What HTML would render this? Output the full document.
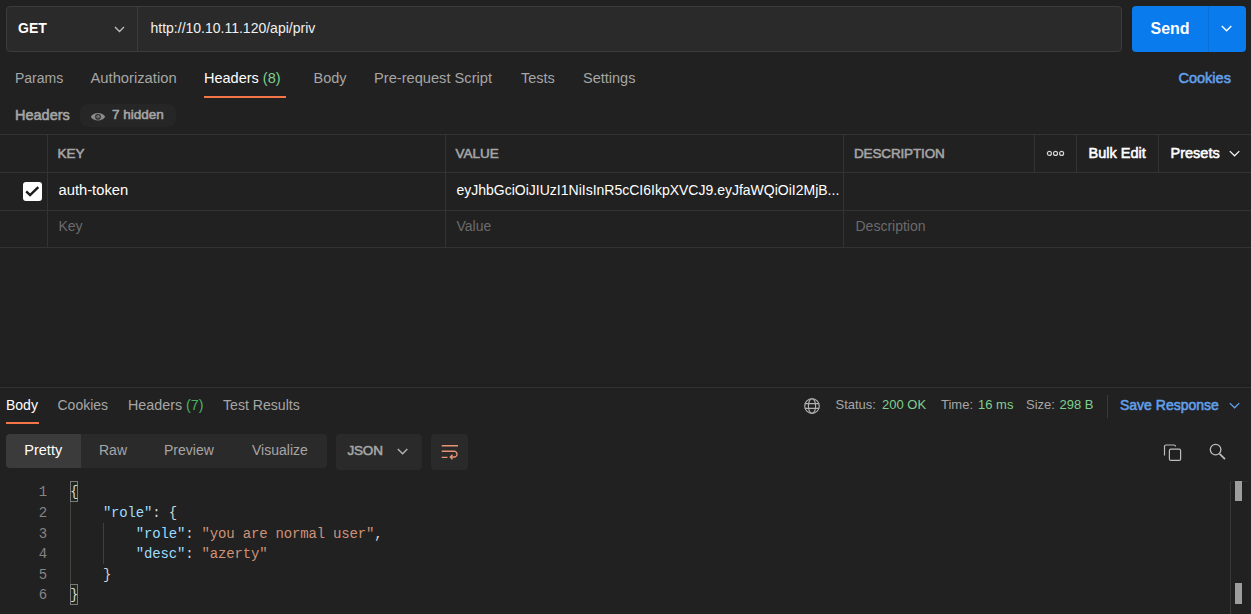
<!DOCTYPE html>
<html><head><meta charset="utf-8">
<style>
*{margin:0;padding:0;box-sizing:border-box}
html,body{width:1251px;height:614px;overflow:hidden;background:#212121}
body{position:relative;font-family:"Liberation Sans",sans-serif;color:#fff}
.a{position:absolute}
.t{position:absolute;white-space:nowrap;line-height:20px;font-size:14px}
.b{font-weight:bold}
.sb{-webkit-text-stroke-width:0.55px}
.g{color:#a6a6a6}
.w{color:#fff}
.ph{color:#6b6b6b}
.grn{color:#7fcf8f}
.grn2{color:#45b460}
.blue{color:#62a0ea}
.hl{position:absolute;left:0;width:1251px;height:1px;background:#333}
.vl{position:absolute;width:1px;background:#333}
svg{position:absolute;overflow:visible}
.ln{left:0;width:47px;text-align:right;color:#858585}
.cd{left:70px;color:#d4d4d4}
.k{color:#9cdcfe}
.s{color:#ce9178}
.mono{font-family:"Liberation Mono",monospace;font-size:14px;letter-spacing:-0.18px;line-height:20.6px;white-space:pre}
</style></head><body>

<!-- URL bar -->
<div class="a" style="left:6px;top:6px;width:1116px;height:46px;border:1px solid #3c3c3c;border-radius:4px;background:#2a2a2a"></div>
<div class="a" style="left:137px;top:7px;width:1px;height:44px;background:#3c3c3c"></div>
<div class="t b w" style="left:18px;top:18px">GET</div>
<svg style="left:114.3px;top:25.5px" width="11" height="7" viewBox="0 0 11 7"><path d="M1 1 L5.5 5.5 L10 1" fill="none" stroke="#bdbdbd" stroke-width="1.4"/></svg>
<div class="t" style="left:150.5px;top:18px;color:#f0f0f0">http://10.10.11.120/api/priv</div>

<div class="a" style="left:1132px;top:6px;width:114px;height:46px;border-radius:4px;background:#097bed"></div>
<div class="a" style="left:1208px;top:6px;width:1px;height:46px;background:#0a6fd6"></div>
<div class="t b w" style="left:1150.5px;top:18.5px;font-size:16px">Send</div>
<svg style="left:1221.4px;top:25.4px" width="11" height="7" viewBox="0 0 11 7"><path d="M0.8 1.1 L5.6 5.8 L10.3 1.1" fill="none" stroke="#fff" stroke-width="1.4"/></svg>

<!-- request tabs -->
<div class="t g" style="left:15px;top:68px;font-size:14px">Params</div>
<div class="t g" style="left:90.5px;top:68px;font-size:14.75px">Authorization</div>
<div class="t w" style="left:204px;top:68px;font-size:14.5px">Headers <span class="grn">(8)</span></div>
<div class="t g" style="left:313.5px;top:68px;font-size:14.5px">Body</div>
<div class="t g" style="left:374px;top:68px;font-size:14.65px">Pre-request Script</div>
<div class="t g" style="left:521px;top:68px;font-size:14.5px">Tests</div>
<div class="t g" style="left:583px;top:68px;font-size:14.5px">Settings</div>
<div class="a" style="left:204px;top:96px;width:82px;height:2px;background:#f37548"></div>
<div class="t sb blue" style="left:1178.5px;top:67.5px;font-size:14.5px">Cookies</div>

<!-- headers label -->
<div class="t sb g" style="left:15px;top:105px;font-size:14.5px">Headers</div>
<div class="a" style="left:80px;top:104px;width:96px;height:23px;border-radius:8px;background:#262626"></div>
<svg style="left:90px;top:111.5px" width="16" height="10" viewBox="0 0 16 10"><path d="M0.8 4.8 C3.5 -0.2 12.5 -0.2 15.2 4.8 C12.5 9.8 3.5 9.8 0.8 4.8 Z" fill="#8a8a8a"/><circle cx="8" cy="4.8" r="2.3" fill="#8a8a8a" stroke="#262626" stroke-width="1.1"/><path d="M7.4 3.6 V5.3 H8.8" fill="none" stroke="#3a3a3a" stroke-width="0.7"/></svg>
<div class="t sb g" style="left:112px;top:104.5px;font-size:13.5px">7 hidden</div>

<!-- table -->
<div class="hl" style="top:134px"></div>
<div class="hl" style="top:172px"></div>
<div class="hl" style="top:210px"></div>
<div class="hl" style="top:247px"></div>
<div class="vl" style="left:47px;top:134px;height:113px"></div>
<div class="vl" style="left:445px;top:134px;height:113px"></div>
<div class="vl" style="left:843px;top:134px;height:113px"></div>
<div class="vl" style="left:1034px;top:134px;height:38px"></div>
<div class="vl" style="left:1076px;top:134px;height:38px"></div>
<div class="vl" style="left:1158px;top:134px;height:38px"></div>

<div class="t sb g" style="left:57.5px;top:143.5px;font-size:13.5px">KEY</div>
<div class="t sb g" style="left:455.5px;top:143.5px;font-size:13.5px">VALUE</div>
<div class="t sb g" style="left:854px;top:143.5px;font-size:13.5px;letter-spacing:-0.15px">DESCRIPTION</div>
<svg style="left:1044px;top:150px" width="22" height="7" viewBox="0 0 22 7"><circle cx="5.4" cy="3.4" r="2" fill="none" stroke="#d0d0d0" stroke-width="1.2"/><circle cx="11.5" cy="3.4" r="2" fill="none" stroke="#d0d0d0" stroke-width="1.2"/><circle cx="17.6" cy="3.4" r="2" fill="none" stroke="#d0d0d0" stroke-width="1.2"/></svg>
<div class="t sb w" style="left:1088.5px;top:143px;font-size:14.5px">Bulk Edit</div>
<div class="t sb w" style="left:1170.5px;top:143px;font-size:14.5px">Presets</div>
<svg style="left:1228.6px;top:149.8px" width="11" height="7" viewBox="0 0 11 7"><path d="M0.8 1.1 L5.6 5.8 L10.3 1.1" fill="none" stroke="#f0f0f0" stroke-width="1.3"/></svg>

<div class="a" style="left:22.5px;top:181.5px;width:19px;height:19px;border-radius:3px;background:#fff"></div>
<svg style="left:22.5px;top:181.5px" width="19" height="19" viewBox="0 0 19 19"><path d="M3.2 9.3 L7.1 13.1 L15.3 5.2" fill="none" stroke="#1a1a1a" stroke-width="2.4"/></svg>
<div class="t w" style="left:58.5px;top:180px;font-size:14.75px">auth-token</div>
<div class="t w" style="left:456.5px;top:180px">eyJhbGciOiJIUzI1NiIsInR5cCI6IkpXVCJ9.eyJfaWQiOiI2MjB...</div>
<div class="t ph" style="left:58.5px;top:216px">Key</div>
<div class="t ph" style="left:456.5px;top:216px">Value</div>
<div class="t ph" style="left:855.5px;top:216px">Description</div>

<!-- split -->
<div class="a" style="left:0;top:384px;width:1251px;height:3px;background:#1f1f1f"></div>
<div class="hl" style="top:387px"></div>

<!-- response tabs -->
<div class="t w" style="left:6px;top:395px">Body</div>
<div class="a" style="left:6px;top:422px;width:33px;height:2px;background:#f37548"></div>
<div class="t g" style="left:57.5px;top:395px">Cookies</div>
<div class="t g" style="left:128px;top:395px;font-size:14.3px">Headers <span class="grn2">(7)</span></div>
<div class="t g" style="left:223px;top:395px;font-size:14.1px">Test Results</div>

<svg style="left:804px;top:398px" width="16" height="16" viewBox="0 0 16 16"><circle cx="8" cy="8" r="7.3" fill="none" stroke="#b0b0b0" stroke-width="1.15"/><ellipse cx="8" cy="8" rx="3.6" ry="7.3" fill="none" stroke="#b0b0b0" stroke-width="1.15"/><path d="M0.9 5.6 H15.1 M0.9 10.3 H15.1" stroke="#b0b0b0" stroke-width="1.15"/></svg>
<div class="t g" style="left:835.5px;top:394.7px;font-size:13px">Status:</div>
<div class="t grn" style="left:882px;top:394.7px;font-size:13px">200 OK</div>
<div class="t g" style="left:941px;top:394.7px;font-size:13px">Time:</div>
<div class="t grn" style="left:978px;top:394.7px;font-size:13px">16 ms</div>
<div class="t g" style="left:1026px;top:394.7px;font-size:13px">Size:</div>
<div class="t grn" style="left:1059.5px;top:394.7px;font-size:13px">298 B</div>
<div class="a" style="left:1107px;top:395px;width:1px;height:23px;background:#3a3a3a"></div>
<div class="t sb blue" style="left:1120px;top:394.5px;font-size:14px">Save Response</div>
<svg style="left:1228.8px;top:402.2px" width="11" height="7" viewBox="0 0 11 7"><path d="M0.8 1.1 L5.6 5.8 L10.3 1.1" fill="none" stroke="#62a0ea" stroke-width="1.3"/></svg>

<!-- response toolbar -->
<div class="a" style="left:6px;top:434px;width:321px;height:34px;border-radius:4px;background:#2a2a2a"></div>
<div class="a" style="left:6px;top:434px;width:75px;height:34px;border-radius:4px 0 0 4px;background:#3b3b3b"></div>
<div class="t w" style="left:24.3px;top:440px;font-size:14.5px">Pretty</div>
<div class="t g" style="left:99px;top:440px">Raw</div>
<div class="t g" style="left:164px;top:440px">Preview</div>
<div class="t g" style="left:252px;top:440px">Visualize</div>

<div class="a" style="left:336px;top:434px;width:86px;height:36px;border-radius:4px;background:#2a2a2a"></div>
<div class="t sb g" style="left:347.5px;top:440.5px;font-size:13.5px;letter-spacing:-0.2px">JSON</div>
<svg style="left:396.5px;top:448.4px" width="11" height="7" viewBox="0 0 11 7"><path d="M0.8 1.1 L5.6 5.8 L10.3 1.1" fill="none" stroke="#b5b5b5" stroke-width="1.4"/></svg>

<div class="a" style="left:431px;top:434px;width:37px;height:36px;border-radius:4px;background:#2a2a2a"></div>
<svg style="left:441px;top:444px" width="18" height="15" viewBox="0 0 18 15"><path d="M0.7 1.8 H17 M0.7 7.3 H14 A3 3 0 0 1 14 13 H9.5 M11.5 10.8 L9.3 13 L11.5 15.2 M0.7 13.4 H6.5" fill="none" stroke="#e69274" stroke-width="1.4"/></svg>

<svg style="left:1163px;top:443.6px" width="20" height="18" viewBox="0 0 20 18"><path d="M1.5 11.5 V2.5 A1.5 1.5 0 0 1 3 1 H11 A1.5 1.5 0 0 1 12.5 2.5" fill="none" stroke="#bdbdbd" stroke-width="1.2"/><rect x="6.4" y="5.2" width="11.2" height="11.2" rx="1.5" fill="none" stroke="#bdbdbd" stroke-width="1.2"/></svg>
<svg style="left:1209px;top:443px" width="18" height="18" viewBox="0 0 18 18"><circle cx="6.6" cy="6.6" r="5.3" fill="none" stroke="#bdbdbd" stroke-width="1.3"/><path d="M10.6 10.8 L16 16.2" stroke="#bdbdbd" stroke-width="1.7"/></svg>

<!-- editor -->
<div class="a" style="left:70px;top:481.3px;width:8px;height:20.6px;border:1px solid #7a7a7a;background:rgba(0,100,0,0.1)"></div>
<div class="a" style="left:70px;top:584.3px;width:8px;height:20.6px;border:1px solid #7a7a7a;background:rgba(0,100,0,0.1)"></div>
<div class="a" style="left:70px;top:502px;width:1px;height:82px;background:#454540"></div>
<div class="a" style="left:103px;top:523px;width:1px;height:41px;background:#404040"></div>
<div class="a mono ln" style="top:482px">1</div>
<div class="a mono cd" style="top:482px">{</div>
<div class="a mono ln" style="top:503px">2</div>
<div class="a mono cd" style="top:503px">    <span class="k">"role"</span>: {</div>
<div class="a mono ln" style="top:524px">3</div>
<div class="a mono cd" style="top:524px">        <span class="k">"role"</span>: <span class="s">"you are normal user"</span>,</div>
<div class="a mono ln" style="top:544px">4</div>
<div class="a mono cd" style="top:544px">        <span class="k">"desc"</span>: <span class="s">"azerty"</span></div>
<div class="a mono ln" style="top:565px">5</div>
<div class="a mono cd" style="top:565px">    }</div>
<div class="a mono ln" style="top:585px">6</div>
<div class="a mono cd" style="top:585px">}</div>

<div class="a" style="left:1230px;top:481px;width:1px;height:133px;background:#3a3a3a"></div>
<div class="a" style="left:1230px;top:481px;width:18px;height:1px;background:#2c2c2c"></div>
<div class="a" style="left:1235px;top:481px;width:7px;height:20px;background:#9e9e9e"></div>
<div class="a" style="left:1235px;top:583px;width:7px;height:20.5px;background:#9e9e9e"></div>

</body></html>
